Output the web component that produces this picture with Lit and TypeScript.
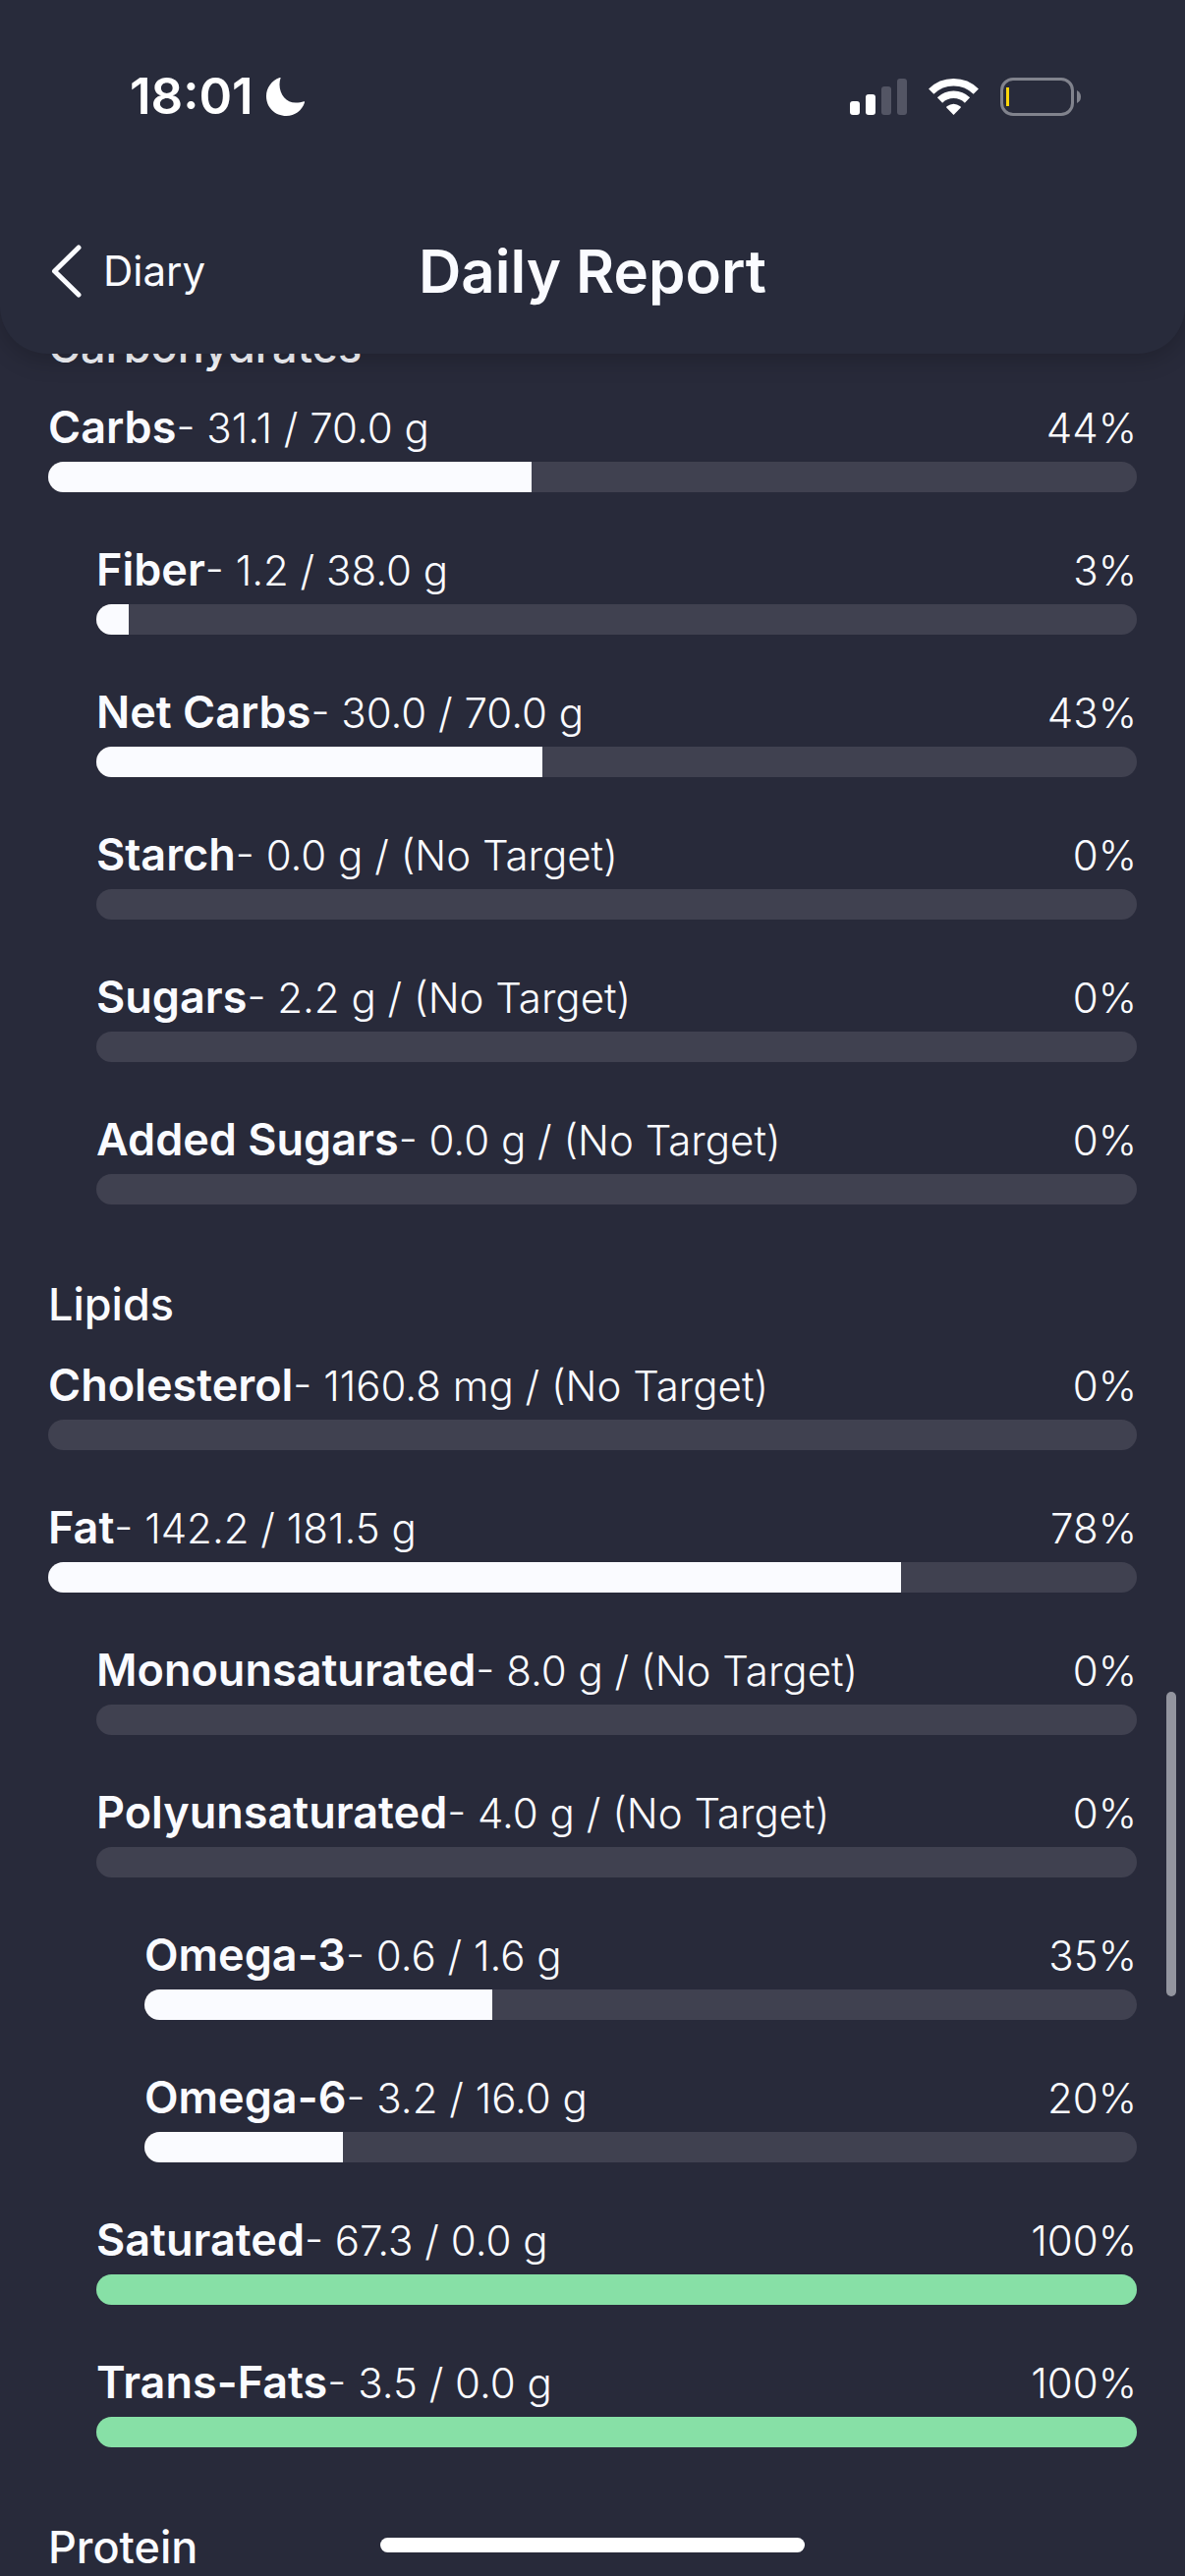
import { LitElement, html, css, svg } from "lit";
import { customElement, property } from "lit/decorators.js";

interface Nutrient {
  name: string;
  amount: string;
  percent: number;
  fill: number;
  level: 0 | 1 | 2;
}

interface Group {
  title: string;
  items: Nutrient[];
}

const GROUPS: Group[] = [
  {
    title: "Carbohydrates",
    items: [
      { name: "Carbs", amount: "31.1 / 70.0 g", percent: 44, fill: 44.4, level: 0 },
      { name: "Fiber", amount: "1.2 / 38.0 g", percent: 3, fill: 3.1, level: 1 },
      { name: "Net Carbs", amount: "30.0 / 70.0 g", percent: 43, fill: 42.9, level: 1 },
      { name: "Starch", amount: "0.0 g / (No Target)", percent: 0, fill: 0, level: 1 },
      { name: "Sugars", amount: "2.2 g / (No Target)", percent: 0, fill: 0, level: 1 },
      { name: "Added Sugars", amount: "0.0 g / (No Target)", percent: 0, fill: 0, level: 1 },
    ],
  },
  {
    title: "Lipids",
    items: [
      { name: "Cholesterol", amount: "1160.8 mg / (No Target)", percent: 0, fill: 0, level: 0 },
      { name: "Fat", amount: "142.2 / 181.5 g", percent: 78, fill: 78.3, level: 0 },
      { name: "Monounsaturated", amount: "8.0 g / (No Target)", percent: 0, fill: 0, level: 1 },
      { name: "Polyunsaturated", amount: "4.0 g / (No Target)", percent: 0, fill: 0, level: 1 },
      { name: "Omega-3", amount: "0.6 / 1.6 g", percent: 35, fill: 35, level: 2 },
      { name: "Omega-6", amount: "3.2 / 16.0 g", percent: 20, fill: 20, level: 2 },
      { name: "Saturated", amount: "67.3 / 0.0 g", percent: 100, fill: 100, level: 1 },
      { name: "Trans-Fats", amount: "3.5 / 0.0 g", percent: 100, fill: 100, level: 1 },
    ],
  },
  { title: "Protein", items: [] },
];

const moon = svg`<path d="M14.6 0.2C13.9 2.4 13.5 4.700 13.500 7C13.500 17.500 20.500 25.600 30 25.600C33 25.600 35.800 25.200 38.400 24.300C38.900 24.200 39.200 24.600 39 25.200C36.500 33.400 29 39 20.400 39C9 39 0 30.300 0 19C0 10.500 5.400 3 13.600 0C14.200 -0.200 14.800 -0.300 14.600 0.200Z" fill="#fff"/>`;

@customElement("status-bar")
export class StatusBar extends LitElement {
  static styles = css`
    :host {
      display: flex;
      justify-content: space-between;
      align-items: center;
      padding: 68px 105px 0 132px;
      color: #fff;
    }
    .side {
      display: flex;
      align-items: center;
    }
    .time {
      font-size: 51px;
      line-height: 60px;
      font-weight: 600;
      margin-right: 13px;
    }
    .icons {
      gap: 22px;
    }
    svg {
      display: block;
    }
  `;

  render() {
    return html`
      <div class="side">
        <span class="time">18:01</span>
        <svg width="39" height="39" viewBox="0 0 39 39" aria-hidden="true">${moon}</svg>
      </div>
      <div class="side icons">
        <svg width="58" height="39" viewBox="0 0 58 39" aria-hidden="true">
          <rect x="0" y="24" width="10" height="14" rx="3" fill="#fff" />
          <rect x="16" y="17" width="10" height="21" rx="3" fill="#fff" />
          <rect x="32" y="9" width="10" height="29" rx="3" fill="#535564" />
          <rect x="48" y="1" width="10" height="37" rx="3" fill="#535564" />
        </svg>
        <svg width="51" height="39" viewBox="0 0 51 39" aria-hidden="true">
          <g fill="none" stroke="#fff" stroke-width="7.500">
            <path d="M2.700 14.200A32.500 32.500 0 0 1 48.300 14.200" />
            <path d="M11.500 23A20 20 0 0 1 39.500 23" />
          </g>
          <path d="M25.500 38L18.400 30.800Q17.700 30 18.600 29.300Q25.500 24.300 32.400 29.300Q33.300 30 32.600 30.800Z" fill="#fff" />
        </svg>
        <svg width="83" height="39" viewBox="0 0 83 39" aria-hidden="true">
          <rect x="1.500" y="1.500" width="72" height="36" rx="11.500" fill="none" stroke="#81838d" stroke-width="3" />
          <path d="M78 13Q82 15 82 19.500Q82 24 78 26Z" fill="#81838d" />
          <rect x="6" y="10" width="3" height="19" fill="#ffd60a" />
        </svg>
      </div>
    `;
  }
}

@customElement("nutrient-row")
export class NutrientRow extends LitElement {
  @property({ attribute: false }) item!: Nutrient;

  static styles = css`
    :host {
      display: block;
    }
    .row {
      padding-bottom: 54px;
    }
    .level-1 {
      padding-left: 49px;
    }
    .level-2 {
      padding-left: 98px;
    }
    .line {
      display: flex;
      justify-content: space-between;
      align-items: baseline;
      height: 50px;
      margin-bottom: 10px;
      font-size: 42px;
      line-height: 50px;
      font-weight: 300;
      white-space: nowrap;
    }
    .name {
      font-size: 45px;
      font-weight: 600;
    }
    .track {
      height: 31px;
      border-radius: 16px;
      background: #404150;
      overflow: hidden;
    }
    .fill {
      height: 100%;
      background: #fafbff;
    }
    .over {
      background: #87e0a6;
    }
  `;

  render() {
    const { name, amount, percent, fill, level } = this.item;
    return html`
      <div class="row level-${level}">
        <div class="line">
          <span><span class="name">${name}</span>- ${amount}</span>
          <span>${percent}%</span>
        </div>
        <div class="track" role="progressbar" aria-label=${name} aria-valuenow=${percent}>
          <div class="fill ${percent >= 100 ? "over" : ""}" style="width:${fill}%"></div>
        </div>
      </div>
    `;
  }
}

@customElement("app-root")
export class AppRoot extends LitElement {
  static styles = css`
    :host {
      display: block;
      position: relative;
      height: 100vh;
      overflow: hidden;
      background: #282a3a;
      color: #fafbff;
      font-family: Inter, "Liberation Sans", sans-serif;
    }
    .header {
      position: relative;
      z-index: 1;
      background: #282b3b;
      border-radius: 0 0 48px 48px;
      box-shadow: 0 6px 24px rgba(0, 0, 0, 0.2);
    }
    .nav {
      display: grid;
      grid-template-columns: 1fr auto 1fr;
      align-items: center;
      padding: 106px 49px 42px;
    }
    .back {
      display: flex;
      align-items: center;
      justify-self: start;
      gap: 20px;
      padding: 0 0 0 2px;
      border: 0;
      background: none;
      color: inherit;
      font: 400 42px/60px Inter, "Liberation Sans", sans-serif;
    }
    .title {
      margin: 0;
      font-size: 60px;
      line-height: 84px;
      font-weight: 600;
    }
    .content {
      margin-top: -32px;
      padding: 0 49px;
    }
    .heading {
      margin: 0;
      padding-bottom: 32px;
      font-size: 45px;
      line-height: 50px;
      font-weight: 500;
    }
    .group {
      padding-bottom: 23px;
    }
    .scroll-thumb {
      position: absolute;
      z-index: 2;
      top: 1722px;
      right: 9px;
      width: 10px;
      height: 310px;
      border-radius: 5px;
      background: #93959f;
    }
    .home-bar {
      position: absolute;
      z-index: 2;
      bottom: 24px;
      left: 50%;
      width: 432px;
      height: 15px;
      margin-left: -216px;
      border-radius: 8px;
      background: #fff;
    }
  `;

  render() {
    return html`
      <header class="header">
        <status-bar></status-bar>
        <div class="nav">
          <button class="back" type="button">
            <svg width="34" height="56" viewBox="0 0 34 56" aria-hidden="true">
              <path d="M29 4L4.500 28L29 52" fill="none" stroke="#fafbff" stroke-width="5" stroke-linecap="round" stroke-linejoin="round" />
            </svg>
            Diary
          </button>
          <h1 class="title">Daily Report</h1>
        </div>
      </header>
      <main class="content">
        ${GROUPS.map(
          (group) => html`
            <section class="group">
              <h2 class="heading">${group.title}</h2>
              ${group.items.map((item) => html`<nutrient-row .item=${item}></nutrient-row>`)}
            </section>
          `,
        )}
      </main>
      <div class="scroll-thumb"></div>
      <div class="home-bar"></div>
    `;
  }
}
